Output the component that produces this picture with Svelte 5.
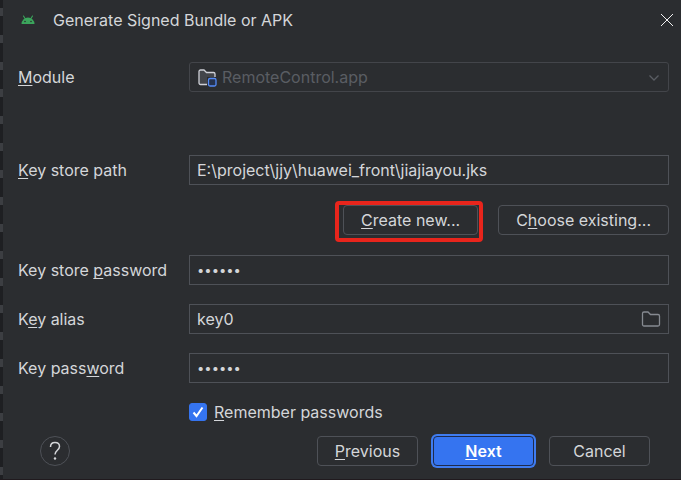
<script>
  import { writable } from 'svelte/store';

  let keyStorePath = 'E:\\project\\jjy\\huawei_front\\jiajiayou.jks';
  let keyStorePassword = 'secret';
  let keyAlias = 'key0';
  let keyPassword = 'secret';
  let remember = writable(true);
</script>

<div class="window">
  <!-- edge of the editor behind the dialog -->
  <div class="gutter"></div>

  <form class="dialog" on:submit|preventDefault>
    <header>
      <svg class="android" viewBox="0 0 14 10" aria-hidden="true">
        <path d="M2.500 1l1.700 2.800M11.500 1L9.800 3.800" stroke="#3ba55c" stroke-width="1.100" stroke-linecap="round" />
        <path d="M.5 9a6.500 6.500 0 0 1 13 0z" fill="#3ba55c" />
        <circle cx="4" cy="6.500" r=".8" fill="#2b2d30" />
        <circle cx="10" cy="6.500" r=".8" fill="#2b2d30" />
      </svg>
      <h1>Generate Signed Bundle or APK</h1>
      <button type="button" class="close" aria-label="Close">
        <svg width="14" height="14" viewBox="0 0 14 14"><path d="M1 1l12 12M13 1L1 13" stroke="#f0f0f0" fill="none" /></svg>
      </button>
    </header>

    <div class="row module">
      <label for="module"><u>M</u>odule</label>
      <div class="field">
        <svg class="folder" width="20" height="18" viewBox="0 0 20 18" aria-hidden="true">
          <path d="M3.500 15.500A1.500 1.500 0 0 1 2 14V2.500A1.500 1.500 0 0 1 3.500 1H7l2.500 2.500h7A1.500 1.500 0 0 1 18 5v10.500z" fill="#43454a" stroke="#ced0d6" stroke-width="1.300" />
          <rect x="10" y="8" width="10" height="10" fill="#2b2d30" />
          <rect x="11.500" y="9.500" width="7.500" height="7.500" rx="1.500" fill="#25324d" stroke="#548af7" stroke-width="1.300" />
        </svg>
        <select id="module" disabled>
          <option>RemoteControl.app</option>
        </select>
        <svg class="chevron" width="12" height="8" viewBox="0 0 12 8" aria-hidden="true"><path d="M1.500 1.500L6 6l4.500-4.500" stroke="#5a5d63" stroke-width="1.300" fill="none" /></svg>
      </div>
    </div>

    <div class="row">
      <label for="path"><u>K</u>ey store path</label>
      <input type="text" id="path" bind:value={keyStorePath} />
    </div>

    <div class="actions">
      <div class="highlight">
        <button type="button"><u>C</u>reate new...</button>
      </div>
      <button type="button">C<u>h</u>oose existing...</button>
    </div>

    <div class="row">
      <label for="store-password">Key store <u>p</u>assword</label>
      <input type="password" id="store-password" bind:value={keyStorePassword} />
    </div>

    <div class="row">
      <label for="alias">K<u>e</u>y alias</label>
      <div class="field">
        <input type="text" id="alias" bind:value={keyAlias} />
        <button type="button" class="browse" aria-label="Browse">
          <svg width="20" height="18" viewBox="0 0 20 18"><path d="M3 16a1.500 1.500 0 0 1-1.500-1.500v-11A1.500 1.500 0 0 1 3 2h4l2.500 2.500H17A1.500 1.500 0 0 1 18.500 6v8.500A1.500 1.500 0 0 1 17 16z" fill="none" stroke="#868a91" stroke-width="1.300" /></svg>
        </button>
      </div>
    </div>

    <div class="row">
      <label for="key-password">Key pass<u>w</u>ord</label>
      <input type="password" id="key-password" bind:value={keyPassword} />
    </div>

    <label class="remember">
      <input type="checkbox" bind:checked={$remember} />
      <svg width="12" height="12" viewBox="0 0 12 12" aria-hidden="true"><path d="M1.500 6.500l3 3.500L10.500 1.500" stroke="#fff" stroke-width="2" fill="none" /></svg>
      <span><u>R</u>emember passwords</span>
    </label>

    <footer>
      <button type="button" class="help" aria-label="Help">
        <svg width="14" height="20" viewBox="0 0 14 20"><path d="M2.500 6c0-2.700 1.800-4.500 4.500-4.500s4.500 1.700 4.500 4c0 3.700-4.500 3.800-4.500 8" stroke="#d4d6d9" stroke-width="1.500" fill="none" /><circle cx="7" cy="17.500" r="1.200" fill="#d4d6d9" /></svg>
      </button>
      <button type="button"><u>P</u>revious</button>
      <button type="submit" class="primary"><u>N</u>ext</button>
      <button type="button">Cancel</button>
    </footer>
  </form>
</div>

<style>
  :global(body) {
    margin: 0;
    background: #2b2d30;
  }

  .window {
    display: flex;
    min-height: 100vh;
    box-sizing: border-box;
    border-bottom: 1px solid #201a1e;
    background: #2b2d30;
    color: #d4d6d9;
    font: 16px/20px Inter, sans-serif;
  }

  .gutter {
    width: 3px;
    background: repeating-linear-gradient(#1e1f22 0 8px, #3c3e42 8px 16px, #1e1f22 16px 27px);
  }

  .dialog {
    flex: 1;
    min-width: 0;
    padding: 0 12px 0 15px;
  }

  header {
    display: flex;
    align-items: center;
    height: 40px;
    margin-bottom: 22px;
  }

  .android {
    width: 14px;
    height: 10px;
    margin: 0 18px 0 3px;
    fill: none;
  }

  h1 {
    flex: 1;
    margin: 0;
    font-size: 16px;
    font-weight: 400;
  }

  u {
    text-decoration: underline 1px;
    text-underline-offset: 2px;
    text-decoration-skip-ink: none;
  }

  .row {
    display: grid;
    grid-template-columns: 171px 1fr;
    align-items: center;
    margin-bottom: 19px;
  }

  .module {
    margin-bottom: 63px;
  }

  .field {
    position: relative;
    display: flex;
  }

  input,
  select {
    box-sizing: border-box;
    width: 100%;
    height: 30px;
    padding: 0 7px;
    border: 1px solid #4e5157;
    border-radius: 0;
    background: transparent;
    color: inherit;
    font: inherit;
    outline: none;
  }

  input[type='password'] {
    font-size: 13px;
  }

  select {
    padding-left: 32px;
    border-color: #43454a;
    border-radius: 3px;
    appearance: none;
    color: #5a5d63;
    opacity: 1;
  }

  .folder,
  .chevron {
    position: absolute;
    pointer-events: none;
  }

  .folder {
    left: 8px;
    top: 7px;
  }

  .chevron {
    right: 9px;
    top: 12px;
  }

  button {
    height: 30px;
    padding: 0 17px;
    border: 1px solid #4e5157;
    border-radius: 4px;
    background: transparent;
    color: inherit;
    font: inherit;
    white-space: nowrap;
  }

  .close,
  .browse {
    display: flex;
    align-items: center;
    padding: 0;
    border: none;
  }

  .close {
    margin-right: -5px;
  }

  .browse {
    position: absolute;
    top: 0;
    right: 8px;
  }

  .actions {
    display: flex;
    justify-content: flex-end;
    gap: 20px;
    margin: 20px 0;
  }

  .highlight {
    position: relative;
  }

  .highlight::after {
    content: '';
    position: absolute;
    inset: -4px -5px -7px -8px;
    border: 4px solid #e8251c;
    border-radius: 4px;
    pointer-events: none;
  }

  .remember {
    position: relative;
    display: flex;
    align-items: center;
    gap: 7px;
    width: max-content;
    margin-left: 171px;
  }

  .remember input {
    width: 18px;
    height: 18px;
    margin: 0;
    padding: 0;
    border-radius: 3px;
    appearance: none;
  }

  .remember input:checked {
    border-color: #3574f0;
    background: #3574f0;
  }

  .remember svg {
    position: absolute;
    left: 3px;
    visibility: hidden;
  }

  .remember input:checked + svg {
    visibility: visible;
  }

  footer {
    display: flex;
    align-items: center;
    gap: 15px;
    margin-top: 14px;
    padding-right: 19px;
  }

  footer button {
    width: 101px;
    padding: 0;
  }

  footer .primary {
    border-color: #1e2b4d;
    background: #3574f0;
    box-shadow: 0 0 0 2px #3f7cf0;
    color: #fff;
    font-weight: 600;
  }

  footer .help {
    display: flex;
    align-items: center;
    justify-content: center;
    width: 30px;
    margin: 0 auto 0 22px;
    border-radius: 50%;
  }
</style>
